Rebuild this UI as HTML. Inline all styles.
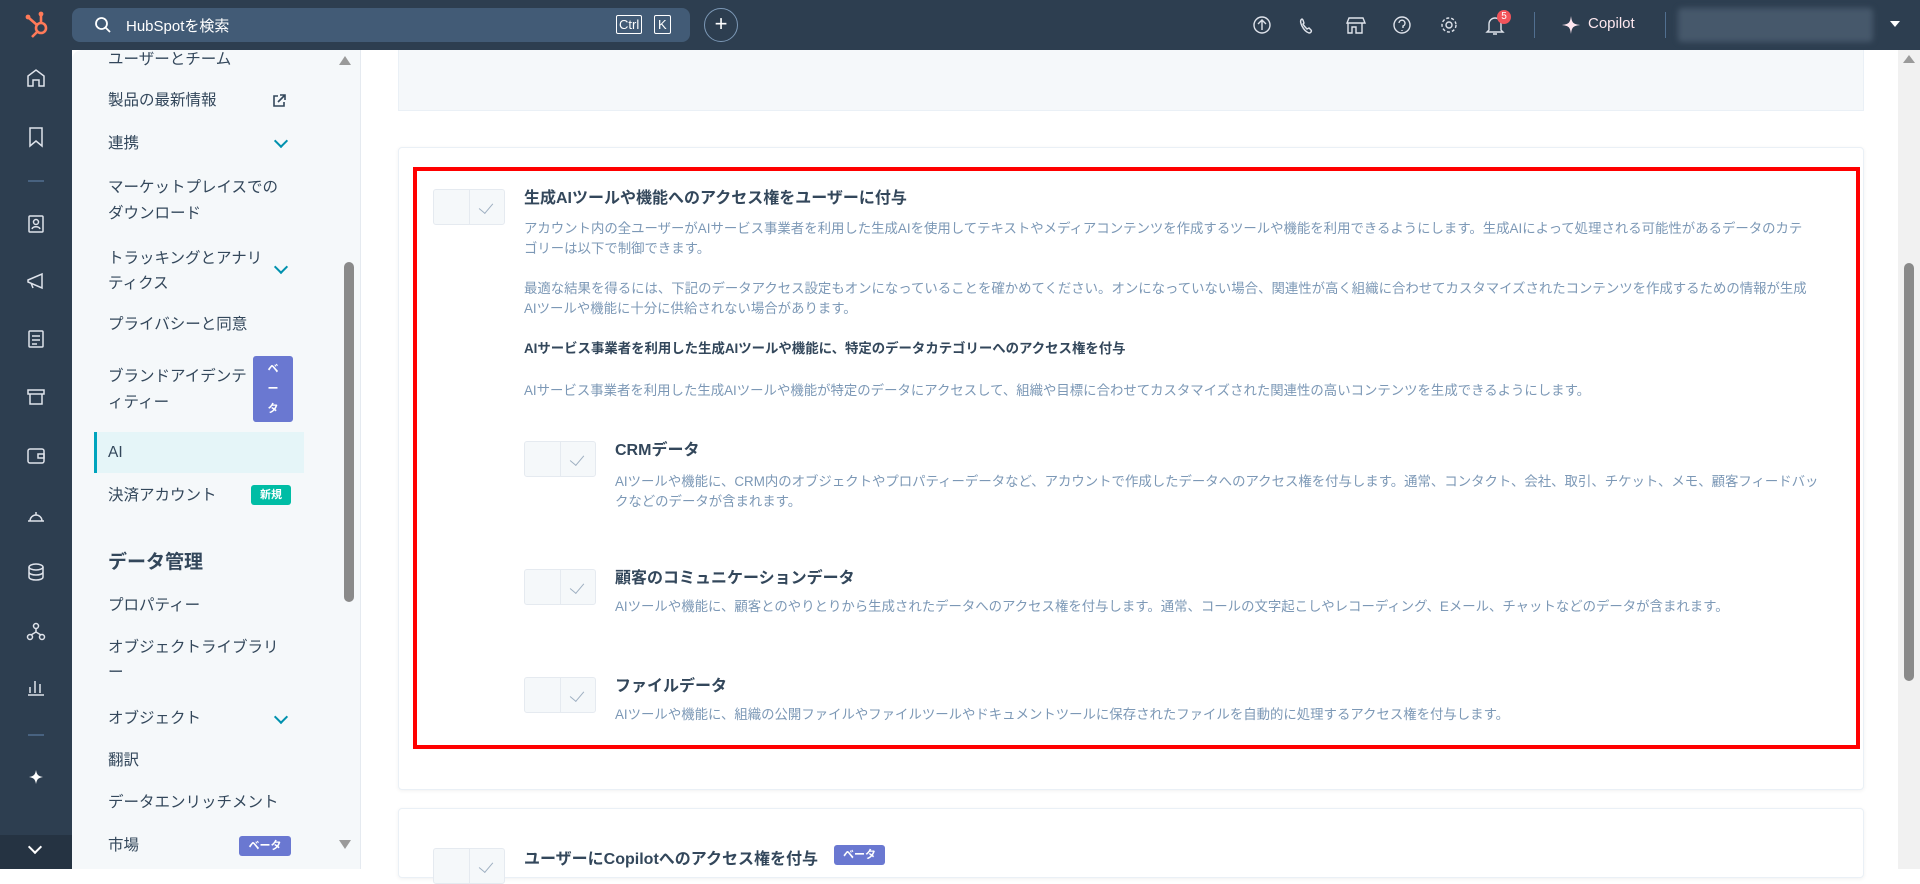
<!DOCTYPE html>
<html><head><meta charset="utf-8"><style>
*{margin:0;padding:0;box-sizing:border-box}
body{width:1920px;height:869px;overflow:hidden;background:#fff;font-family:"Liberation Sans","Noto Sans CJK JP",sans-serif;color:#33475b;position:relative}
.a{position:absolute}
#top{left:0;top:0;width:1920px;height:50px;background:#2d3e50}
#rail{left:0;top:50px;width:72px;height:819px;background:#2d3e50}
#side{left:72px;top:50px;width:289px;height:819px;background:#f5f8fa;border-top-left-radius:10px;border-right:1px solid #e5eaf0}
.si{position:absolute;left:36px;font-size:15.5px;color:#33475b;white-space:nowrap;line-height:25px}
.chev{position:absolute;left:204px;width:10px;height:10px;border-right:2px solid #0091ae;border-bottom:2px solid #0091ae;transform:rotate(45deg)}
.badge{position:absolute;background:#6a78d1;color:#fff;font-size:11px;font-weight:bold;border-radius:3px;text-align:center}
.ic{position:absolute;stroke:#b0c1d4;fill:none;stroke-width:1.5}
.tg{position:absolute;width:72px;height:36px;background:#f5f8fa;border:1px solid #e5eaf0;border-radius:3px}
.tg:before{content:"";position:absolute;left:35px;top:0;bottom:0;border-left:1px solid #e5eaf0}
.tg:after{content:"";position:absolute;left:48px;top:10px;width:7px;height:12px;border-right:1.5px solid #9fb0c2;border-bottom:1.5px solid #9fb0c2;transform:rotate(40deg)}
.h{position:absolute;font-size:16px;font-weight:bold;color:#33475b;white-space:nowrap}
.d{position:absolute;font-size:13.4px;color:#7c98b6;line-height:20px;white-space:nowrap}
</style></head><body>
<div id="top" class="a"></div>
<!-- logo -->
<svg class="a" style="left:24px;top:10px" width="28" height="30" viewBox="0 0 28 30"><g stroke="#ff7a59" stroke-width="2.6" fill="none"><circle cx="17" cy="18" r="5"/><line x1="17" y1="13" x2="17" y2="5"/><line x1="13" y1="15" x2="5" y2="8"/><line x1="13" y1="22" x2="8" y2="27"/></g><circle cx="17" cy="4" r="2.4" fill="#ff7a59"/><circle cx="4" cy="7" r="2.4" fill="#ff7a59"/></svg>
<div class="a" style="left:72px;top:8px;width:618px;height:34px;background:#425b76;border-radius:8px"></div>
<svg class="a" style="left:94px;top:16px" width="18" height="18"><circle cx="7.5" cy="7.5" r="5.5" stroke="#fff" stroke-width="1.8" fill="none"/><line x1="11.5" y1="11.5" x2="16" y2="16" stroke="#fff" stroke-width="1.8"/></svg>
<div class="a" style="left:126px;top:15px;font-size:15px;color:#fff">HubSpotを検索</div>
<div class="a" style="left:616px;top:15px;font-size:13px;color:#fff;border:1px solid #fff;border-radius:2px;padding:0 2px;line-height:17px">Ctrl</div>
<div class="a" style="left:654px;top:15px;font-size:13px;color:#fff;border:1px solid #fff;border-radius:2px;padding:0 3px;line-height:17px">K</div>
<div class="a" style="left:704px;top:8px;width:34px;height:34px;border:1px solid #7c98b6;border-radius:50%;color:#fff;font-size:22px;text-align:center;line-height:30px">+</div>
<svg class="a" style="left:1252px;top:15px" width="260" height="22" fill="none" stroke="#dfe3eb" stroke-width="1.4">
<circle cx="10" cy="10" r="8"/><path d="M10 15V5M6 9l4-4 4 4"/>
<path d="M50 4c-2 1-2 3 0 7s4 6 7 7c2 0 3-2 2-3l-2-2-2 1c-1-1-3-3-4-5l1-1-1-3z"/>
<path d="M97 3h14l2 5H95zM96 8v10h4v-6h4v6h6V8"/>
<circle cx="150" cy="10" r="8"/><path d="M147 8a3 3 0 1 1 4 3v2M150 15v1"/>
<circle cx="197" cy="10" r="3"/><circle cx="197" cy="10" r="7" stroke-dasharray="3 2"/>
<path d="M237 15V9a6 6 0 0 1 12 0v6l2 2h-16zM241 19h4"/></svg>
<div class="a" style="left:1497px;top:10px;width:14px;height:14px;border-radius:50%;background:#f2545b;color:#fff;font-size:10px;text-align:center;line-height:14px">5</div>
<div class="a" style="left:1534px;top:12px;width:1px;height:26px;background:#516f90"></div>
<svg class="a" style="left:1562px;top:16px" width="18" height="18"><path d="M9 0C10 7 11 8 18 9 11 10 10 11 9 18 8 11 7 10 0 9 7 8 8 7 9 0z" fill="#ffe6ef"/></svg>
<div class="a" style="left:1588px;top:15px;font-size:15px;color:#fde7ee">Copilot</div>
<div class="a" style="left:1665px;top:12px;width:1px;height:26px;background:#516f90"></div>
<div class="a" style="left:1678px;top:8px;width:195px;height:34px;background:#46586b;border-radius:4px;filter:blur(3px)"></div>
<div class="a" style="left:1890px;top:21px;border:5px solid transparent;border-top:6px solid #fff"></div>

<div id="rail" class="a"></div>
<svg class="a" style="left:24px;top:68px" width="26" height="800" fill="none" stroke="#dfe3eb" stroke-width="1.5">
<path d="M4 18V8l8-6 8 6v10h-5v-6h-6v6z"/>
<path d="M6 60h12v18l-6-5-6 5z"/>
<line x1="4" y1="113" x2="20" y2="113" stroke="#516f90"/>
<rect x="5" y="148" width="14" height="16" rx="1"/><circle cx="12" cy="154" r="2.5"/><path d="M8 161c1-3 7-3 8 0"/>
<path d="M4 212l14-6v14L4 214zM7 215l2 5"/>
<rect x="5" y="263" width="14" height="16" rx="1"/><path d="M8 268h8M8 272h8M8 276h5"/>
<path d="M4 322h16v4H4zM6 326v10h12v-10"/>
<rect x="4" y="381" width="16" height="14" rx="2"/><path d="M14 386h6v4h-6z"/>
<path d="M4 453h16M6 453a6 6 0 0 1 12 0M12 444v3"/>
<ellipse cx="12" cy="499" rx="7" ry="3"/><path d="M5 499v10c0 4 14 4 14 0v-10M5 504c0 4 14 4 14 0"/>
<circle cx="12" cy="558" r="2.5"/><circle cx="6" cy="569" r="2.5"/><circle cx="18" cy="569" r="2.5"/><path d="M12 561v3l-5 3M12 564l5 3"/>
<path d="M6 625v-6M11 625v-12M16 625v-9M4 627h16"/>
<line x1="4" y1="667" x2="20" y2="667" stroke="#516f90"/>
<path d="M12 702c1 5 2 6 7 7-5 1-6 2-7 7-1-5-2-6-7-7 5-1 6-2 7-7z" fill="#fff" stroke="none"/>
</svg>
<div class="a" style="left:0;top:835px;width:72px;height:34px;background:#253342"></div>
<div class="a" style="left:30px;top:842px;width:10px;height:10px;border-right:2px solid #fff;border-bottom:2px solid #fff;transform:rotate(45deg)"></div>

<div id="side" class="a">
<div class="si" style="top:-3px">ユーザーとチーム</div>
<div class="si" style="top:38px">製品の最新情報</div>
<svg class="a" style="left:200px;top:44px" width="14" height="14" fill="none" stroke="#33475b" stroke-width="1.6"><path d="M6 2H2v10h10V8M8 1h5v5M13 1L6 8"/></svg>
<div class="si" style="top:81px">連携</div><div class="chev" style="top:86px"></div>
<div class="si" style="top:125px">マーケットプレイスでの</div>
<div class="si" style="top:151px">ダウンロード</div>
<div class="si" style="top:196px">トラッキングとアナリ</div>
<div class="si" style="top:221px">ティクス</div><div class="chev" style="top:212px"></div>
<div class="si" style="top:262px">プライバシーと同意</div>
<div class="si" style="top:314px">ブランドアイデンテ</div>
<div class="si" style="top:340px">ィティー</div>
<div class="badge" style="left:181px;top:306px;width:40px;height:66px;line-height:20px;padding-top:3px">ベ<br>ー<br>タ</div>
<div class="a" style="left:22px;top:382px;width:210px;height:41px;background:#e5f5f8;border-left:3px solid #00a4bd"></div>
<div class="si" style="top:390px">AI</div>
<div class="si" style="top:433px">決済アカウント</div>
<div class="badge" style="left:179px;top:435px;width:40px;height:20px;line-height:20px;background:#00bda5">新規</div>
<div class="si" style="top:500px;font-size:19px;font-weight:bold">データ管理</div>
<div class="si" style="top:543px">プロパティー</div>
<div class="si" style="top:585px">オブジェクトライブラリ</div>
<div class="si" style="top:610px">ー</div>
<div class="si" style="top:656px">オブジェクト</div><div class="chev" style="top:662px"></div>
<div class="si" style="top:698px">翻訳</div>
<div class="si" style="top:740px">データエンリッチメント</div>
<div class="si" style="top:783px">市場</div>
<div class="badge" style="left:167px;top:786px;width:52px;height:20px;line-height:20px">ベータ</div>
<div class="a" style="left:267px;top:6px;border:6px solid transparent;border-bottom:9px solid #9a9a9a;border-top:0"></div>
<div class="a" style="left:272px;top:212px;width:10px;height:340px;background:#8a8a8a;border-radius:5px"></div>
<div class="a" style="left:267px;top:790px;border:6px solid transparent;border-top:9px solid #9a9a9a;border-bottom:0"></div>
</div>

<div class="a" style="left:398px;top:50px;width:1466px;height:61px;background:#f5f8fa;border:1px solid #eaf0f6;border-top:0"></div>
<div class="a" style="left:398px;top:147px;width:1466px;height:643px;background:#fff;border:1px solid #eaf0f6;border-radius:4px;box-shadow:0 1px 4px rgba(0,0,0,.06)"></div>
<div class="a" style="left:413px;top:167px;width:1447px;height:582px;border:4px solid #f00"></div>

<div class="tg" style="left:433px;top:189px"></div>
<div class="h" style="left:524px;top:184px">生成AIツールや機能へのアクセス権をユーザーに付与</div>
<div class="d" style="left:524px;top:219px">アカウント内の全ユーザーがAIサービス事業者を利用した生成AIを使用してテキストやメディアコンテンツを作成するツールや機能を利用できるようにします。生成AIによって処理される可能性があるデータのカテ<br>ゴリーは以下で制御できます。</div>
<div class="d" style="left:524px;top:279px">最適な結果を得るには、下記のデータアクセス設定もオンになっていることを確かめてください。オンになっていない場合、関連性が高く組織に合わせてカスタマイズされたコンテンツを作成するための情報が生成<br>AIツールや機能に十分に供給されない場合があります。</div>
<div class="d" style="left:524px;top:339px;font-weight:bold;color:#33475b">AIサービス事業者を利用した生成AIツールや機能に、特定のデータカテゴリーへのアクセス権を付与</div>
<div class="d" style="left:524px;top:381px">AIサービス事業者を利用した生成AIツールや機能が特定のデータにアクセスして、組織や目標に合わせてカスタマイズされた関連性の高いコンテンツを生成できるようにします。</div>

<div class="tg" style="left:524px;top:441px"></div>
<div class="h" style="left:615px;top:436px">CRMデータ</div>
<div class="d" style="left:615px;top:472px">AIツールや機能に、CRM内のオブジェクトやプロパティーデータなど、アカウントで作成したデータへのアクセス権を付与します。通常、コンタクト、会社、取引、チケット、メモ、顧客フィードバッ<br>クなどのデータが含まれます。</div>

<div class="tg" style="left:524px;top:569px"></div>
<div class="h" style="left:615px;top:564px">顧客のコミュニケーションデータ</div>
<div class="d" style="left:615px;top:597px">AIツールや機能に、顧客とのやりとりから生成されたデータへのアクセス権を付与します。通常、コールの文字起こしやレコーディング、Eメール、チャットなどのデータが含まれます。</div>

<div class="tg" style="left:524px;top:677px"></div>
<div class="h" style="left:615px;top:672px">ファイルデータ</div>
<div class="d" style="left:615px;top:705px">AIツールや機能に、組織の公開ファイルやファイルツールやドキュメントツールに保存されたファイルを自動的に処理するアクセス権を付与します。</div>

<div class="a" style="left:398px;top:808px;width:1466px;height:70px;background:#fff;border:1px solid #eaf0f6;border-radius:4px;box-shadow:0 1px 4px rgba(0,0,0,.06)"></div>
<div class="tg" style="left:433px;top:848px"></div>
<div class="h" style="left:524px;top:845px">ユーザーにCopilotへのアクセス権を付与</div>
<div class="badge" style="left:834px;top:845px;width:51px;height:20px;line-height:20px">ベータ</div>

<div class="a" style="left:1898px;top:50px;width:22px;height:819px;background:#f1f1f1"></div>
<div class="a" style="left:1903px;top:55px;border:6px solid transparent;border-bottom:8px solid #9a9a9a;border-top:0"></div>
<div class="a" style="left:1904px;top:263px;width:10px;height:418px;background:#8a8a8a;border-radius:5px"></div>
</body></html>
